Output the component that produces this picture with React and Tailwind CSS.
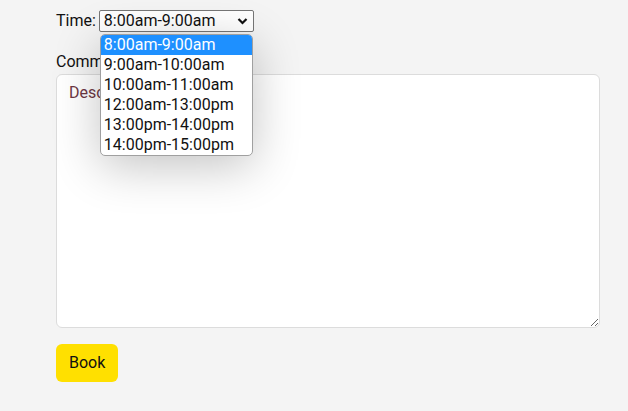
import React from "react";

const options = [
  "8:00am-9:00am",
  "9:00am-10:00am",
  "10:00am-11:00am",
  "12:00am-13:00pm",
  "13:00pm-14:00pm",
  "14:00pm-15:00pm",
];

export default function App() {
  return (
    <div
      className="min-h-[411px] w-full bg-[#f4f4f4] text-[#111] text-[16px] leading-[20px]"
      style={{ fontFamily: "Roboto, 'Liberation Sans', sans-serif" }}
    >
      <div className="pl-[56px] pr-[28px] pt-[10px] flex flex-col">
        <div className="flex items-center gap-[3px] h-[22px]">
          <span>Time:</span>
          <div className="relative">
            <div className="flex items-center justify-between w-[155px] h-[22px] bg-white border border-[#767676] rounded-[2px] pl-[4px] pr-[5px]">
              <span>8:00am-9:00am</span>
              <svg width="11" height="8" viewBox="0 0 11 8" fill="none">
                <path d="M1.5 2 L5.5 6 L9.5 2" stroke="#111" strokeWidth="2.2" />
              </svg>
            </div>
            <div className="absolute left-[1px] top-[24px] z-10 w-[153px] bg-white border border-[#a0a0a0] rounded-[5px] overflow-hidden shadow-[0_10px_48px_rgba(0,0,0,0.24)]">
              {options.map((o, i) => (
                <div
                  key={o}
                  className={
                    "h-[20px] pl-[3px] leading-[20px] " +
                    (i === 0 ? "bg-[#1e90ff] text-white" : "text-[#111]")
                  }
                >
                  {o}
                </div>
              ))}
            </div>
          </div>
        </div>
        <div className="mt-[20px] h-[22px] leading-[20px]">Comments:</div>
        <textarea
          className="w-[544px] h-[254px] bg-white border border-[#dcdcdc] rounded-[6px] px-[12px] py-[8px] outline-none placeholder:text-[#6e3844] text-[16px]"
          placeholder="Description"
        />
        <div className="mt-[16px]">
          <button className="h-[38px] px-[13px] bg-[#ffe000] rounded-[6px] text-[16px] text-[#111]">
            Book
          </button>
        </div>
      </div>
    </div>
  );
}
